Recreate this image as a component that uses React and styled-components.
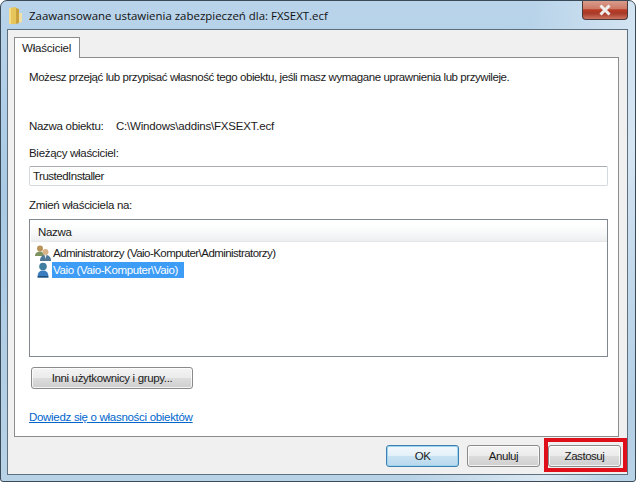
import styled, { createGlobalStyle } from "styled-components";

const Global = createGlobalStyle`
  html, body {
    margin: 0;
    padding: 0;
    background: #fff;
  }
  * { box-sizing: border-box; }
`;

const Win = styled.div`
  width: 636px;
  height: 482px;
  display: flex;
  flex-direction: column;
  padding: 0 7px 6px 6px;
  border: 1px solid #3a4a58;
  border-radius: 7px 7px 3px 3px;
  overflow: hidden;
  font-family: "Liberation Sans", Arial, sans-serif;
  font-size: 11.5px;
  letter-spacing: -0.3px;
  color: #1a1a1a;
  background:
    linear-gradient(105deg, rgba(255,255,255,0) 70%, rgba(255,255,255,.5) 88%, rgba(255,255,255,0) 97%),
    linear-gradient(180deg, #b9d4ea 0%, #a9c9e4 40%, #b8d2e6 100%);
`;

const TitleBar = styled.div`
  height: 28px;
  flex: none;
  display: flex;
  align-items: flex-start;
  gap: 4px;
`;

const FolderIcon = styled.svg`
  width: 14px;
  height: 17px;
  margin-top: 6px;
  margin-left: 2px;
  margin-right: 2px;
  flex: none;
`;

const TitleText = styled.div`
  flex: 1;
  padding-top: 7px;
  font-family: "Open Sans", sans-serif;
  font-size: 11.45px;
  letter-spacing: 0;
  line-height: 16px;
  color: #111;
`;

const CloseBtn = styled.div`
  width: 46px;
  height: 20px;
  margin-top: -1px;
  flex: none;
  display: flex;
  align-items: center;
  justify-content: center;
  border: 1px solid #4a3a3a;
  border-top: none;
  border-radius: 0 0 4px 4px;
  background: linear-gradient(180deg, #dba091 0%, #cd7a66 45%, #b93c27 52%, #a83a28 70%, #cc7460 100%);
`;

const Client = styled.div`
  flex: 1;
  display: flex;
  flex-direction: column;
  background: #f0f0f0;
  border: 1px solid #5e6f7e;
  padding: 7px 8px 0 6px;
`;

const TabStrip = styled.div`
  display: flex;
  height: 21px;
  flex: none;
  position: relative;
  z-index: 1;
`;

const Tab = styled.div`
  width: 66px;
  height: 21px;
  background: #fff;
  border: 1px solid #8c8c8c;
  border-bottom: none;
  display: flex;
  align-items: center;
  padding-left: 7px;
  letter-spacing: -0.2px;
`;

const Panel = styled.div`
  height: 380px;
  flex: none;
  background: #fff;
  border: 1px solid #8c8c8c;
  margin-top: -1px;
  padding: 11px 10px 0 14px;
  display: flex;
  flex-direction: column;
`;

const Line = styled.div`
  line-height: 16px;
  height: 16px;
  white-space: nowrap;
  margin-top: ${(p) => p.$top || 0}px;
`;

const Intro = styled(Line)`
  letter-spacing: -0.43px;
`;

const InfoRow = styled.div`
  display: flex;
  line-height: 16px;
  margin-top: 33px;
  white-space: nowrap;
`;

const InfoLabel = styled.div`
  width: 87px;
  flex: none;
`;

const InfoValue = styled.div`
  letter-spacing: -0.2px;
`;

const Field = styled.div`
  height: 20px;
  margin-top: 5px;
  border: 1px solid #d5dade;
  border-top-color: #a9adb2;
  border-radius: 2px;
  background: #fff;
  padding-left: 3px;
  line-height: 18px;
  letter-spacing: -0.5px;
`;

const ListBox = styled.div`
  height: 138px;
  margin-top: 6px;
  border: 1px solid #828790;
  padding: 4px 0 0 0;
  display: flex;
  flex-direction: column;
`;

const ListHead = styled.div`
  height: 18px;
  background: linear-gradient(180deg, #fff 0%, #f6f7f8 60%, #eceef0 100%);
  border-bottom: 1px solid #e4e6e8;
  padding-left: 7px;
  line-height: 16px;
  margin-bottom: 2px;
  margin-left: 1px;
`;

const ListRow = styled.div`
  display: flex;
  align-items: center;
  height: 17px;
  padding-left: 5px;
  gap: 1px;
  white-space: nowrap;
`;

const RowLabel = styled.span`
  padding: 0 6px 0 1px;
  line-height: 16px;
  letter-spacing: ${(p) => (p.$selected ? "-0.37px" : "-0.55px")};
  background: ${(p) => (p.$selected ? "#3d9cf5" : "transparent")};
  color: ${(p) => (p.$selected ? "#fff" : "inherit")};
`;

const UserSvg = styled.svg`
  width: 16px;
  height: 16px;
  flex: none;
`;

const Button = styled.div`
  width: ${(p) => p.$w || 73}px;
  height: 22px;
  display: flex;
  align-items: center;
  justify-content: center;
  border: 1px solid ${(p) => (p.$primary ? "#3c7fb1" : "#8a8a8a")};
  border-radius: 3px;
  letter-spacing: -0.45px;
  background: ${(p) =>
    p.$primary
      ? "linear-gradient(180deg, #f2f8fc 0%, #e4f0f8 48%, #c8e2f2 52%, #b8d8ec 100%)"
      : "linear-gradient(180deg, #f4f4f4 0%, #ebebeb 48%, #dcdcdc 52%, #cfcfcf 100%)"};
  box-shadow: inset 0 0 0 1px ${(p) => (p.$primary ? "#9fd4ee" : "rgba(255,255,255,.75)")};
`;

const OwnersButton = styled(Button)`
  margin: 10px 0 0 2px;
  letter-spacing: -0.35px;
`;

const HelpLink = styled.a`
  margin-top: 20px;
  line-height: 16px;
  color: #0066cc;
  text-decoration: underline;
  align-self: flex-start;
`;

const Footer = styled.div`
  flex: 1;
  display: flex;
  justify-content: flex-end;
  align-items: flex-start;
  gap: 8px;
  padding: 8px 0 0 0;
  margin-right: -2px;
`;

const Highlighted = styled.div`
  position: relative;
`;

const RedFrame = styled.div`
  position: absolute;
  left: -4px;
  top: -7px;
  width: 83px;
  height: 34px;
  border: 4px solid #e0101a;
  pointer-events: none;
`;

const Folder = () => (
  <FolderIcon viewBox="0 0 14 17">
    <path d="M0 1 L7 0 L7 17 L0 17 Z" fill="#e6c65a" />
    <path d="M0 1 L2 1 L2 17 L0 17 Z" fill="#f2dd8f" />
    <path d="M7 1 L10 2 L10 16 L7 17 Z" fill="#c9a13c" />
    <path d="M10 6 L13 6 L13 15 L10 16 Z" fill="#f0e0a4" />
  </FolderIcon>
);

const GroupIcon = () => (
  <UserSvg viewBox="0 0 16 16">
    <circle cx="5" cy="3.5" r="3" fill="#b8935a" />
    <path d="M0 11 C0 7.5 3 6.5 5 6.5 C7 6.5 9 7.5 9 11 Z" fill="#7e9460" />
    <circle cx="10.5" cy="7" r="3" fill="#d7b487" />
    <path d="M5 16 C5 11 8 10 10.5 10 C13 10 16 11 16 16 Z" fill="#4f7896" />
    <path d="M9.5 10 L11.5 10 L10.5 14 Z" fill="#e8eef2" />
  </UserSvg>
);

const UserIcon = () => (
  <UserSvg viewBox="0 0 16 16">
    <circle cx="8" cy="4.5" r="3.8" fill="#3f7f9f" />
    <path d="M2.5 15.5 C2.5 10 5 8.5 8 8.5 C11 8.5 13.5 10 13.5 15.5 Z" fill="#3a7cc0" />
    <path d="M2.5 15.5 L13.5 15.5 L13 14 L3 14 Z" fill="#1f4f78" />
  </UserSvg>
);

export default function App() {
  return (
    <>
      <Global />
      <Win>
        <TitleBar>
          <Folder />
          <TitleText>Zaawansowane ustawienia zabezpieczeń dla: FXSEXT.ecf</TitleText>
          <CloseBtn>
            <svg width="14" height="12" viewBox="0 0 14 12">
              <path d="M2.5 1.5 L11.5 10.5 M11.5 1.5 L2.5 10.5" stroke="#eee" strokeWidth="3" />
            </svg>
          </CloseBtn>
        </TitleBar>
        <Client>
          <TabStrip>
            <Tab>Właściciel</Tab>
          </TabStrip>
          <Panel>
            <Intro>Możesz przejąć lub przypisać własność tego obiektu, jeśli masz wymagane uprawnienia lub przywileje.</Intro>
            <InfoRow>
              <InfoLabel>Nazwa obiektu:</InfoLabel>
              <InfoValue>C:\Windows\addins\FXSEXT.ecf</InfoValue>
            </InfoRow>
            <Line $top={11}>Bieżący właściciel:</Line>
            <Field>TrustedInstaller</Field>
            <Line $top={11}>Zmień właściciela na:</Line>
            <ListBox>
              <ListHead>Nazwa</ListHead>
              <ListRow>
                <GroupIcon />
                <RowLabel>Administratorzy (Vaio-Komputer\Administratorzy)</RowLabel>
              </ListRow>
              <ListRow>
                <UserIcon />
                <RowLabel $selected>Vaio (Vaio-Komputer\Vaio)</RowLabel>
              </ListRow>
            </ListBox>
            <OwnersButton $w={162}>Inni użytkownicy i grupy...</OwnersButton>
            <HelpLink>Dowiedz się o własności obiektów</HelpLink>
          </Panel>
          <Footer>
            <Button $primary>OK</Button>
            <Button>Anuluj</Button>
            <Highlighted>
              <Button>Zastosuj</Button>
              <RedFrame />
            </Highlighted>
          </Footer>
        </Client>
      </Win>
    </>
  );
}
